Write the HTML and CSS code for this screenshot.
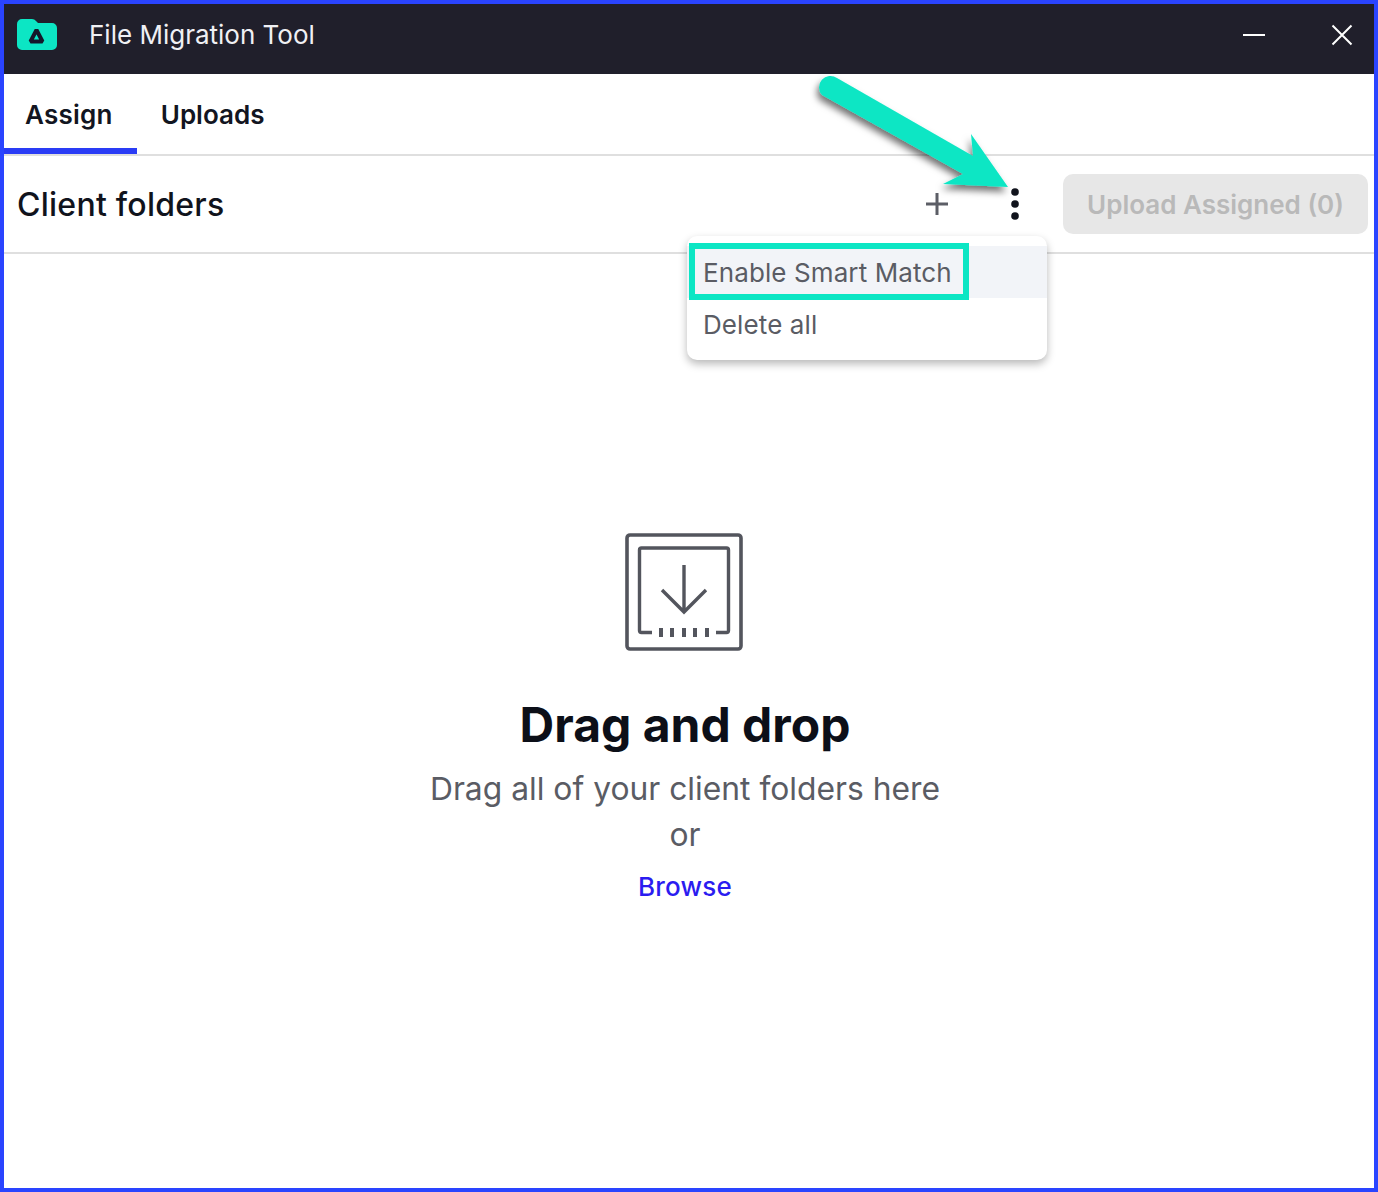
FILE: index.html
```html
<!DOCTYPE html>
<html lang="en">
<head>
<meta charset="utf-8">
<title>File Migration Tool</title>
<link rel="stylesheet" href="styles.css">
</head>
<body>
<div class="window">
  <header class="titlebar">
    <svg class="app-logo" width="40" height="32" viewBox="0 0 40 32">
      <path d="M0 5a5 5 0 0 1 5-5h10a5 5 0 0 1 4 2l2 2h14a5 5 0 0 1 5 5v17a5 5 0 0 1-5 5H5a5 5 0 0 1-5-5z" fill="#0ce6c4"/>
      <path d="M19.500 11 25.500 22.500H13.500z" fill="none" stroke="#14182a" stroke-width="4" stroke-linejoin="bevel"/>
    </svg>
    <span class="app-title">File Migration Tool</span>
    <svg class="win-min" width="22" height="4" viewBox="0 0 22 4"><path d="M0 2h22" stroke="#fff" stroke-width="2"/></svg>
    <svg class="win-close" width="22" height="22" viewBox="0 0 22 22"><path d="M1.500 1.500l19 19M20.500 1.500l-19 19" stroke="#fff" stroke-width="2"/></svg>
  </header>
  <nav class="tabs">
    <a class="tab tab-active">Assign</a>
    <a class="tab">Uploads</a>
  </nav>
  <section class="toolbar">
    <h1 class="toolbar-title">Client folders</h1>
    <svg class="icon-plus" width="24" height="24" viewBox="0 0 24 24"><path d="M12 1v22M1 12h22" stroke="#5c5e66" stroke-width="3"/></svg>
    <svg class="icon-more" width="10" height="34" viewBox="0 0 10 34"><circle cx="5" cy="5" r="3.800" fill="#10131c"/><circle cx="5" cy="17" r="3.800" fill="#10131c"/><circle cx="5" cy="29" r="3.800" fill="#10131c"/></svg>
    <button class="upload-btn" disabled>Upload Assigned (0)</button>
  </section>
  <main class="dropzone">
    <svg class="drop-icon" width="118" height="118" viewBox="0 0 118 118" fill="none" stroke="#53555d">
      <rect x="2" y="2" width="114" height="114" rx="3" stroke-width="3.600"/>
      <path d="M27 99.500H16.500a2 2 0 0 1-2-2V17a2 2 0 0 1 2-2h85a2 2 0 0 1 2 2v80.500a2 2 0 0 1-2 2H91" stroke-width="3.400"/>
      <path d="M36 95v9M47 95v9M59 95v9M70 95v9M82 95v9" stroke-width="4"/>
      <path d="M59 32v47M37 57l22 22 22-22" stroke-width="3.400"/>
    </svg>
    <h2 class="drop-title">Drag and drop</h2>
    <p class="drop-text">Drag all of your client folders here</p>
    <p class="drop-or">or</p>
    <a class="drop-browse">Browse</a>
  </main>

  <div class="menu">
    <div class="menu-item menu-item-hover">Enable Smart Match</div>
    <div class="menu-item">Delete all</div>
  </div>
  <div class="highlight"></div>
  <svg class="callout-arrow" width="220" height="135" viewBox="0 0 220 135">
    <defs>
      <filter id="arrow-shadow" x="-10%" y="-10%" width="120%" height="130%">
        <feDropShadow dx="-2" dy="5" stdDeviation="3.500" flood-color="#000" flood-opacity=".55"/>
      </filter>
    </defs>
    <path d="M27 8 163 86 161 64 198 117 133 114 153 104 12 25A11.400 11.400 0 0 1 27 8z" fill="#0ce6c4" filter="url(#arrow-shadow)"/>
  </svg>
</div>
</body>
</html>
```
FILE: styles.css
```css
* { box-sizing: border-box; }
html, body { margin: 0; height: 100%; }
body { font-family: Inter, "Liberation Sans", sans-serif; background: #fff; }

.window {
  position: relative;
  width: 1378px;
  height: 1192px;
  border: 4px solid #2a44ff;
  display: flex;
  flex-direction: column;
  overflow: hidden;
  background: #fff;
}

.titlebar {
  flex: none;
  height: 70px;
  background: #201f2b;
  display: flex;
  align-items: center;
  padding: 0 0 8px 13px;
}
.app-logo { flex: none; }
.app-title {
  margin-left: 32px;
  color: #f0f0f4;
  font-size: 26px;
  line-height: 30px;
}
.win-min { margin-left: auto; }
.win-close { margin-left: 66px; margin-right: 21px; }

.tabs {
  flex: none;
  height: 82px;
  display: flex;
  gap: 3px;
  border-bottom: 2px solid #dfdfdf;
}
.tab {
  height: 80px;
  padding: 6px 24px 0 21px;
  display: flex;
  align-items: center;
  font-size: 26px;
  font-weight: 600;
  color: #121521;
  border-bottom: 6px solid transparent;
}
.tab-active { border-bottom-color: #2a3cf5; letter-spacing: .25px; }

.toolbar {
  flex: none;
  height: 98px;
  display: flex;
  align-items: center;
  border-bottom: 2px solid #dfdfdf;
  padding: 0 6px 0 13px;
}
.toolbar-title {
  margin: 0;
  font-size: 32px;
  font-weight: 500;
  letter-spacing: .25px;
  color: #10131c;
}
.icon-plus { margin-left: auto; }
.icon-more { margin-left: 61px; }
.upload-btn {
  margin-left: 43px;
  width: 305px;
  height: 60px;
  border: 0;
  border-radius: 10px;
  background: #e7e7e7;
  color: #b9b9b9;
  font: 600 26px Inter, "Liberation Sans", sans-serif;
}

.dropzone {
  flex: 1;
  display: flex;
  flex-direction: column;
  align-items: center;
  padding: 279px 8px 0 0;
}
.drop-icon { flex: none; margin-right: 2px; }
.drop-title {
  margin: 44px 0 0;
  font-size: 48px;
  line-height: 60px;
  font-weight: 700;
  color: #0c0f18;
}
.drop-text {
  margin: 14px 0 0;
  font-size: 31.800px;
  line-height: 40px;
  color: #5a5c64;
}
.drop-or {
  margin: 6px 0 0;
  font-size: 31.800px;
  line-height: 40px;
  color: #5a5c64;
}
.drop-browse {
  margin-top: 17px;
  font-size: 26px;
  line-height: 30px;
  font-weight: 500;
  letter-spacing: .2px;
  color: #2b1cf0;
}

.menu {
  position: absolute;
  left: 683px;
  top: 232px;
  width: 360px;
  height: 124px;
  padding-top: 10px;
  background: #fff;
  border-radius: 10px;
  box-shadow: 0 4px 8px rgba(0, 0, 0, .28);
}
.menu-item {
  height: 52px;
  padding-left: 16px;
  display: flex;
  align-items: center;
  font-size: 26px;
  letter-spacing: .1px;
  color: #5a5c64;
}
.menu-item-hover { background: #f2f4f8; }
.highlight {
  position: absolute;
  left: 685px;
  top: 239px;
  width: 280px;
  height: 57px;
  border: 6px solid #0ce6c4;
}
.callout-arrow {
  position: absolute;
  left: 806px;
  top: 66px;
}
```
